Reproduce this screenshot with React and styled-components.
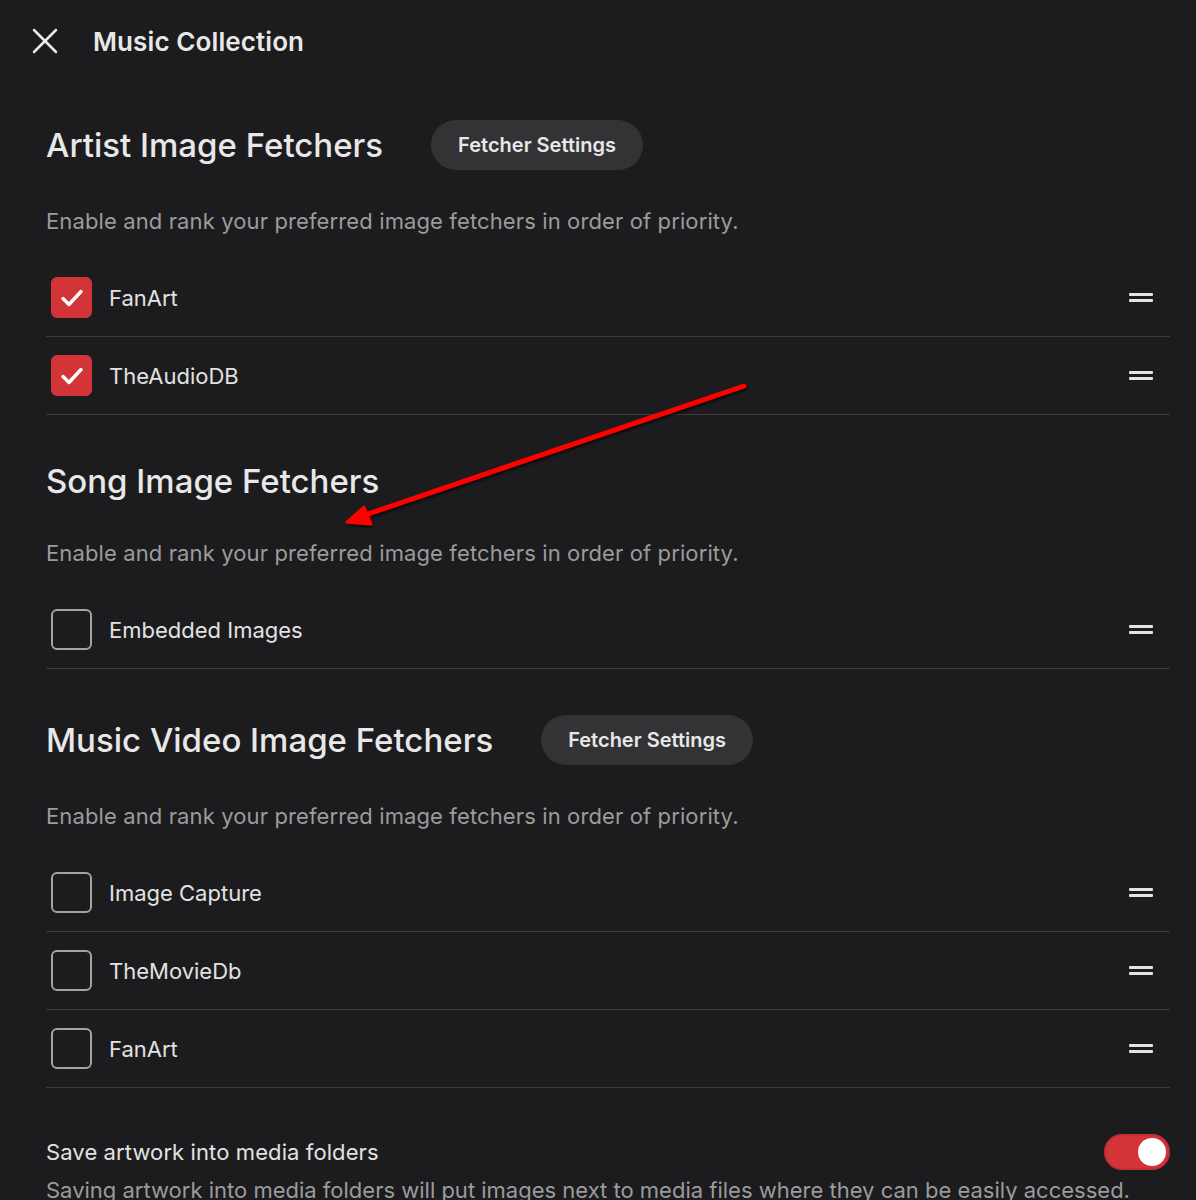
import React, { useState } from "react";
import styled, { createGlobalStyle } from "styled-components";
import { X } from "lucide-react";

const GlobalStyle = createGlobalStyle`
  html, body {
    margin: 0;
    padding: 0;
    background: #1c1c1e;
    font-family: Inter, "Noto Sans", "Liberation Sans", sans-serif;
    color: #e6e6e6;
  }
`;

const Page = styled.div`
  position: relative;
  min-height: 1200px;
  overflow: hidden;
  background: #1c1c1e;
`;

const TopBar = styled.div`
  display: flex;
  align-items: center;
  height: 82px;
  padding-left: 23px;
  gap: 26px;
`;

const CloseButton = styled.button`
  display: flex;
  align-items: center;
  justify-content: center;
  padding: 0;
  background: none;
  border: none;
  color: #ececec;
  cursor: pointer;
`;

const PageTitle = styled.h1`
  margin: 0;
  font-size: 26px;
  font-weight: 600;
  letter-spacing: 0.1px;
  color: #e8e8e8;
`;

const Content = styled.div`
  padding: 0 26px 40px 46px;
`;

const Section = styled.section`
  margin-top: 46px;
  &:first-child {
    margin-top: 38px;
  }
`;

const SectionHeader = styled.div`
  display: flex;
  align-items: center;
  gap: 48px;
`;

const SectionTitle = styled.h2`
  margin: 0;
  font-size: 33px;
  line-height: 41px;
  font-weight: 500;
  color: #e8e8e8;
`;

const PillButton = styled.button`
  height: 50px;
  padding: 0 27px;
  border: none;
  border-radius: 25px;
  background: #333336;
  color: #e8e8e8;
  font-family: inherit;
  font-size: 20px;
  font-weight: 600;
  cursor: pointer;
`;

const Description = styled.p`
  margin: 37px 0 24px;
  font-size: 22px;
  line-height: 28px;
  letter-spacing: 0.12px;
  color: #9b9b9b;
`;

const FetcherRow = styled.div`
  display: flex;
  align-items: center;
  height: 77px;
  padding: 0 17px 0 5px;
  border-bottom: 1px solid #3a3a3c;
`;

const CheckBox = styled.span`
  display: flex;
  align-items: center;
  justify-content: center;
  box-sizing: border-box;
  width: 41px;
  height: 41px;
  border-radius: 6px;
  border: 2px solid ${({ checked }) => (checked ? "#d33438" : "#a3a3a3")};
  background: ${({ checked }) => (checked ? "#d33438" : "transparent")};
  cursor: pointer;
`;

const RowLabel = styled.span`
  flex: 1;
  margin-left: 17px;
  font-size: 22px;
  color: #e2e2e2;
`;

const DragHandle = styled.span`
  display: flex;
  flex-direction: column;
  gap: 3px;
  width: 24px;
  & > i {
    display: block;
    height: 3px;
    border-radius: 1px;
    background: #e4e4e4;
  }
`;

const SettingBlock = styled.div`
  margin-top: 46px;
`;

const SettingRow = styled.div`
  display: flex;
  align-items: center;
  justify-content: space-between;
`;

const SettingLabel = styled.span`
  font-size: 22px;
  letter-spacing: 0.1px;
  color: #e2e2e2;
`;

const SettingHint = styled.p`
  margin: 6px 0 0;
  font-size: 22px;
  line-height: 28px;
  color: #9b9b9b;
`;

const Toggle = styled.button`
  position: relative;
  box-sizing: border-box;
  width: 66px;
  height: 36px;
  padding: 0;
  border-radius: 18px;
  border: 2px solid ${({ on }) => (on ? "#c52f33" : "#777")};
  background: ${({ on }) => (on ? "#d33438" : "#48484a")};
  cursor: pointer;
  &::after {
    content: "";
    position: absolute;
    top: 2px;
    left: ${({ on }) => (on ? "32px" : "2px")};
    width: 28px;
    height: 28px;
    border-radius: 50%;
    background: #fff;
  }
`;

const Annotation = styled.svg`
  position: absolute;
  left: 0;
  top: 0;
  pointer-events: none;
  overflow: visible;
`;

const CheckMark = () => (
  <svg width="28" height="28" viewBox="0 0 28 28">
    <path
      d="M5 14.5l6 6L23 7.5"
      fill="none"
      stroke="#fff"
      strokeWidth="3.4"
      strokeLinecap="round"
      strokeLinejoin="round"
    />
  </svg>
);

const Fetcher = ({ name, enabled, onToggle }) => (
  <FetcherRow>
    <CheckBox checked={enabled} onClick={onToggle}>
      {enabled && <CheckMark />}
    </CheckBox>
    <RowLabel>{name}</RowLabel>
    <DragHandle>
      <i />
      <i />
    </DragHandle>
  </FetcherRow>
);

const initialSections = [
  {
    title: "Artist Image Fetchers",
    settings: true,
    fetchers: [
      { name: "FanArt", enabled: true },
      { name: "TheAudioDB", enabled: true },
    ],
  },
  {
    title: "Song Image Fetchers",
    settings: false,
    fetchers: [{ name: "Embedded Images", enabled: false }],
  },
  {
    title: "Music Video Image Fetchers",
    settings: true,
    fetchers: [
      { name: "Image Capture", enabled: false },
      { name: "TheMovieDb", enabled: false },
      { name: "FanArt", enabled: false },
    ],
  },
];

export default function App() {
  const [sections, setSections] = useState(initialSections);
  const [saveLocal, setSaveLocal] = useState(true);

  const toggleFetcher = (si, fi) => {
    setSections((prev) =>
      prev.map((s, i) =>
        i !== si
          ? s
          : {
              ...s,
              fetchers: s.fetchers.map((f, j) =>
                j === fi ? { ...f, enabled: !f.enabled } : f
              ),
            }
      )
    );
  };

  return (
    <Page>
      <GlobalStyle />
      <TopBar>
        <CloseButton aria-label="Close">
          <X size={44} strokeWidth={1.35} />
        </CloseButton>
        <PageTitle>Music Collection</PageTitle>
      </TopBar>
      <Content>
        {sections.map((section, si) => (
          <Section key={section.title}>
            <SectionHeader>
              <SectionTitle>{section.title}</SectionTitle>
              {section.settings && <PillButton>Fetcher Settings</PillButton>}
            </SectionHeader>
            <Description>
              Enable and rank your preferred image fetchers in order of priority.
            </Description>
            {section.fetchers.map((f, fi) => (
              <Fetcher
                key={f.name + fi}
                name={f.name}
                enabled={f.enabled}
                onToggle={() => toggleFetcher(si, fi)}
              />
            ))}
          </Section>
        ))}
        <SettingBlock>
          <SettingRow>
            <SettingLabel>Save artwork into media folders</SettingLabel>
            <Toggle on={saveLocal} onClick={() => setSaveLocal((v) => !v)} />
          </SettingRow>
          <SettingHint>
            Saving artwork into media folders will put images next to media
            files where they can be easily accessed.
          </SettingHint>
        </SettingBlock>
      </Content>
      <Annotation width="1196" height="1200">
        <defs>
          <filter id="arrowShadow" x="-10%" y="-10%" width="120%" height="130%">
            <feDropShadow dx="1" dy="2" stdDeviation="1.5" floodColor="#000" floodOpacity="0.7" />
          </filter>
        </defs>
        <g filter="url(#arrowShadow)">
          <line
            x1="744"
            y1="386"
            x2="362"
            y2="516"
            stroke="#ff0000"
            strokeWidth="5"
            strokeLinecap="round"
          />
          <path d="M347 522 L364 507 L371 524 Z" fill="#ff0000" stroke="#ff0000" strokeWidth="3" strokeLinejoin="round" />
        </g>
      </Annotation>
    </Page>
  );
}
